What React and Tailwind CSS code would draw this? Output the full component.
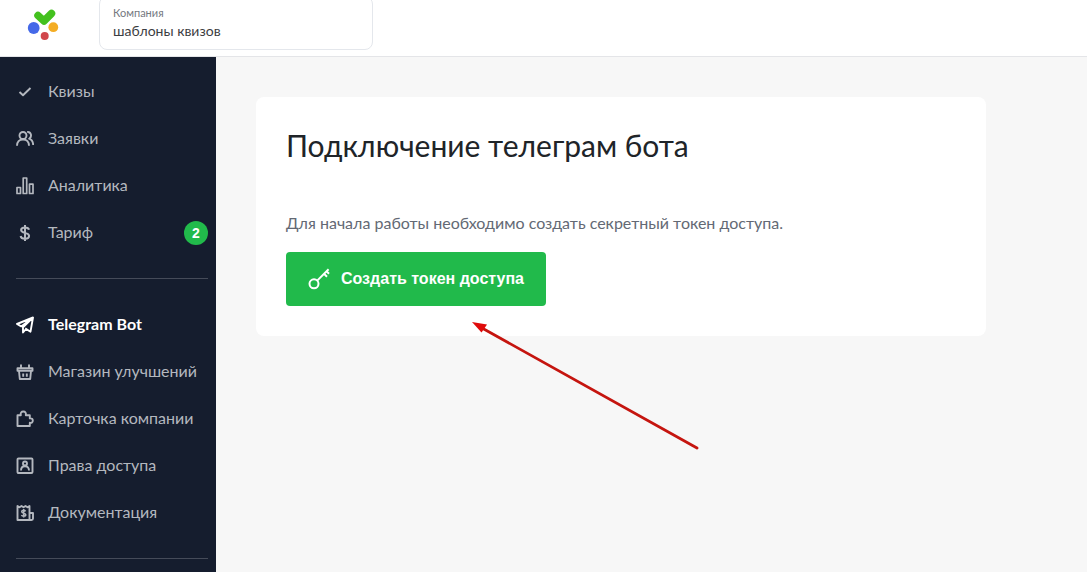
import clsx from "clsx";
import React, { useState } from "react";

function Icon({ children }) {
	return (
		<svg
			viewBox="0 0 18 18"
			className="size-[18px] shrink-0"
			fill="none"
			stroke="currentColor"
			strokeWidth="1.900"
			strokeLinejoin="round"
			aria-hidden="true"
		>
			{children}
		</svg>
	);
}

const ICONS = {
	check: (
		<Icon>
			<path d="M3.500 9 7 12.300 14.500 5" />
		</Icon>
	),
	users: (
		<Icon>
			<circle cx="7" cy="5.500" r="3.500" />
			<path d="M1 15.800c0-4 2.200-6.300 6-6.300s6 2.300 6 6.300M11.200 2c3.800-.5 5.200 4.500 2 6.700 2.600 1 3.900 3.300 4 6.300" />
		</Icon>
	),
	chart: (
		<Icon>
			<g strokeWidth="1.700">
				<path d="M1 10.500h3.500v6H1zM7.200 1h3.500v15.500H7.200zM13.500 7.200H17v9.300h-3.500z" />
			</g>
		</Icon>
	),
	dollar: (
		<Icon>
			<path
				strokeWidth="2"
				d="M13 5.800C12.700 4.200 11.200 3.400 9 3.400c-2.400 0-3.900.9-3.900 2.600 0 3.800 8 1.900 8 5.800 0 1.900-1.600 2.900-4.100 2.900-2.400 0-4.100-.9-4.400-2.700M9 1v16"
			/>
		</Icon>
	),
	plane: (
		<Icon>
			<path d="M17 1.500 1 8l4.200 2.400L17 1.500l-2.500 14.200-5.300-3.300M17 1.500 7 11.200V16.500l3-3.500" />
		</Icon>
	),
	basket: (
		<Icon>
			<path d="M1.500 5.200h15v2.600h-15zM3 8l.8 8h10.400L15 8M5 5V1.500M13 5V1.500M7.200 10.500v3.200M10.800 10.500v3.200" />
		</Icon>
	),
	puzzle: (
		<Icon>
			<path d="M1.500 5.200h3.300c-.5-2.400.5-3.700 2.500-3.700s3 1.300 2.500 3.700h4v3.200c1.900-.3 3 .6 3 2.200s-1.100 2.500-3 2.200V16H1.500z" />
		</Icon>
	),
	access: (
		<Icon>
			<rect x="1.500" y="1.500" width="15" height="14.500" rx="1" />
			<circle cx="9" cy="6.500" r="2" />
			<path d="M5 13.500c0-2.800 1.400-4.300 4-4.300s4 1.500 4 4.300" />
		</Icon>
	),
	receipt: (
		<Icon>
			<path d="M1.500 16V2l2 1.300 2-1.300 2 1.300 2-1.300 2 1.300 2-1.300v14zM13.500 9H17v5.500c0 1-.6 1.500-1.500 1.500h-2" />
			<path
				strokeWidth="1.500"
				d="M9.600 7.300c-.4-.7-1.100-1-2-1-1.200 0-1.900.5-1.900 1.400 0 1.900 4.100 1 4.100 3 0 .9-.8 1.500-2.100 1.500-1.100 0-1.900-.4-2.200-1.200M7.700 5v8.500"
			/>
		</Icon>
	),
};

const MAIN_ITEMS = [
	{ label: "Квизы", icon: "check" },
	{ label: "Заявки", icon: "users" },
	{ label: "Аналитика", icon: "chart" },
	{ label: "Тариф", icon: "dollar", badge: 2 },
];

const EXTRA_ITEMS = [
	{ label: "Telegram Bot", icon: "plane" },
	{ label: "Магазин улучшений", icon: "basket" },
	{ label: "Карточка компании", icon: "puzzle" },
	{ label: "Права доступа", icon: "access" },
	{ label: "Документация", icon: "receipt" },
];

function Logo() {
	return (
		<svg viewBox="0 0 32 32" className="size-8" role="img" aria-label="Логотип">
			<path
				d="m11 7.500 6 5.500 7.500-7.500"
				fill="none"
				stroke="#43c11e"
				strokeWidth="7.500"
				strokeLinecap="round"
				strokeLinejoin="round"
			/>
			<circle cx="6.700" cy="20" r="5.900" fill="#4569e8" />
			<circle cx="26.300" cy="19.200" r="4.900" fill="#f4ad24" />
			<circle cx="17.700" cy="28" r="4" fill="#d1474b" />
		</svg>
	);
}

function NavList({ items, current, onSelect }) {
	return (
		<ul>
			{items.map((item) => (
				<li key={item.label}>
					<a
						href="#"
						onClick={() => onSelect(item.label)}
						className={clsx(
							"flex h-[47px] items-center gap-[14px] whitespace-nowrap",
							current === item.label
								? "font-bold text-white"
								: "text-[#b4b8bf] hover:text-white",
						)}
					>
						{ICONS[item.icon]}
						<span className="pb-0.5">{item.label}</span>
						{item.badge && (
							<span className="ml-auto flex size-6 items-center justify-center rounded-full bg-[#21ba4b] font-['Liberation_Sans',Arial,sans-serif] text-sm font-bold text-white">
								{item.badge}
							</span>
						)}
					</a>
				</li>
			))}
		</ul>
	);
}

function Header() {
	const [company, setCompany] = useState("шаблоны квизов");

	return (
		<header className="flex h-[57px] shrink-0 items-start overflow-hidden border-b border-[#e4e5e8] bg-white">
			<a href="#" className="ml-[27px] mt-2">
				<Logo />
			</a>
			<div className="-mt-1 ml-10 flex h-[54px] w-[274px] flex-col rounded-lg border border-[#e4e7ec] px-[13px] pt-2">
				<label htmlFor="company" className="text-[11px] leading-4 text-[#75797f]">
					Компания
				</label>
				<input
					id="company"
					value={company}
					onChange={(e) => setCompany(e.target.value)}
					className="w-full text-sm leading-5 text-[#3c3e42] outline-none"
				/>
			</div>
		</header>
	);
}

// Red pointer drawn over the card, aimed at the button
function Pointer() {
	return (
		<svg
			viewBox="0 0 228 130"
			className="pointer-events-none absolute left-[216px] top-[225px] h-[130px] w-[228px]"
			aria-hidden="true"
		>
			<path
				d="M10 6 225 126"
				stroke="#c5150f"
				strokeWidth="2.800"
				strokeLinecap="round"
			/>
			<path d="M0 0 15 2.500 9.500 10.500z" fill="#e00b0b" />
		</svg>
	);
}

export default function App() {
	const [current, setCurrent] = useState("Telegram Bot");

	return (
		<div className="flex min-h-screen flex-col bg-[#f7f7f7] font-['Lato','Noto_Sans',sans-serif]">
			<Header />
			<div className="flex flex-1">
				<nav className="w-[216px] shrink-0 bg-[#151d2e] px-4 pt-[11px]">
					<div className="-mr-2 text-base">
						<NavList items={MAIN_ITEMS} current={current} onSelect={setCurrent} />
						<hr className="my-[22px] border-[#454b59]" />
						<NavList items={EXTRA_ITEMS} current={current} onSelect={setCurrent} />
						<hr className="mt-[22px] border-[#454b59]" />
					</div>
				</nav>
				<main className="flex-1 p-10">
					<section className="relative max-w-[730px] rounded-lg bg-white p-[30px]">
						<h1 className="text-[30px] leading-9 text-[#202428]">
							Подключение телеграм бота
						</h1>
						<p className="mt-12 text-base leading-6 text-[#636974]">
							Для начала работы необходимо создать секретный токен доступа.
						</p>
						<button className="mt-[17px] flex h-[54px] items-center gap-[11px] rounded bg-[#21ba4b] px-[22px] font-['Liberation_Sans',Arial,sans-serif] text-base font-bold text-white">
							<svg
								viewBox="0 0 22 22"
								className="size-[22px]"
								fill="none"
								stroke="currentColor"
								strokeWidth="2"
								aria-hidden="true"
							>
								<circle cx="6" cy="15.800" r="4.500" />
								<path d="M9.200 12.600 20.600 1.200M16 5.800l3 3M18.500 3.300l2.500 2.500" />
							</svg>
							Создать токен доступа
						</button>
						<Pointer />
					</section>
				</main>
			</div>
		</div>
	);
}
